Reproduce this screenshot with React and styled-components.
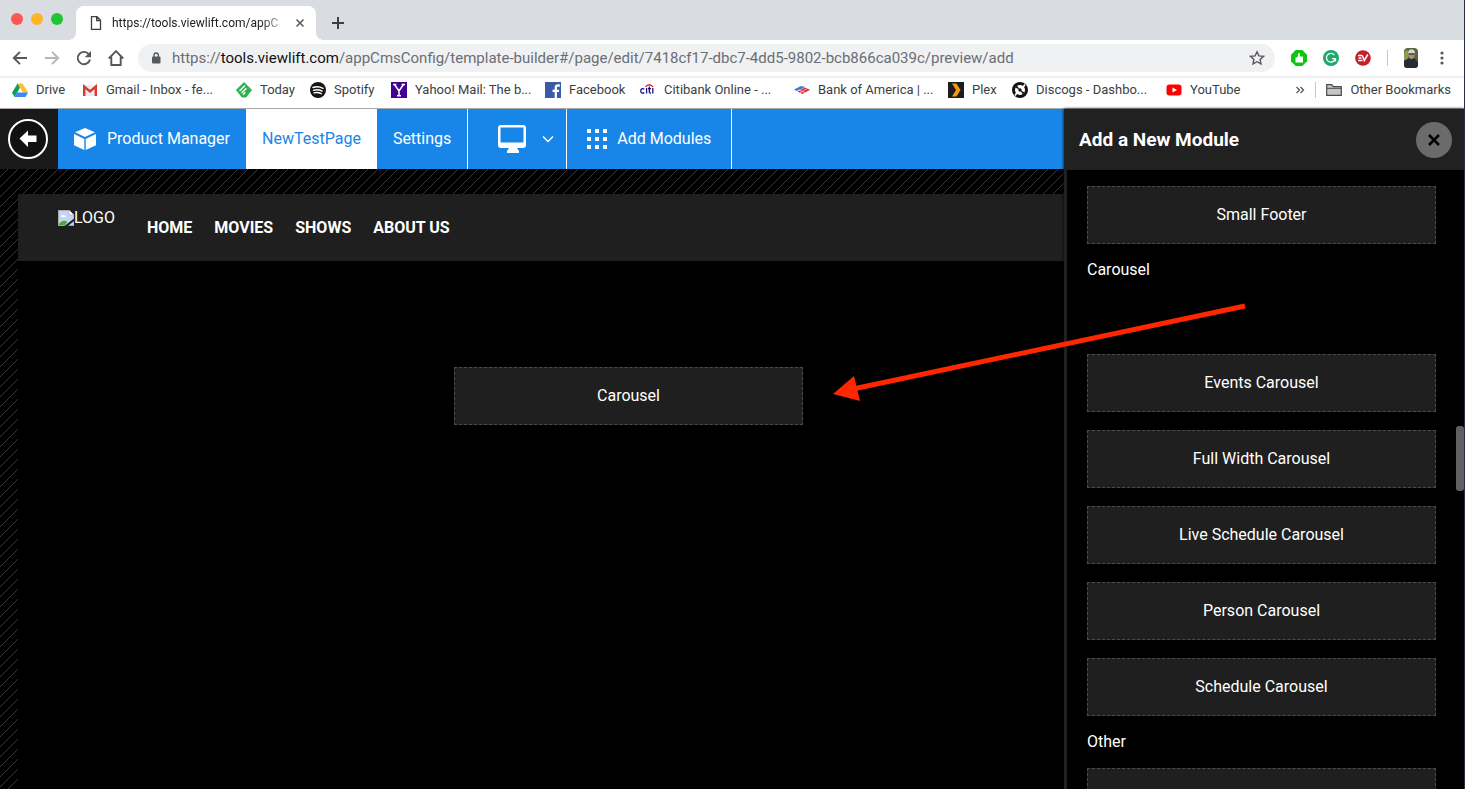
import React, { useState } from 'react'
import styled, { createGlobalStyle } from 'styled-components'

const GlobalStyle = createGlobalStyle`
  * { box-sizing: border-box; }
  body { margin: 0; background: #000; }
  button { margin: 0; padding: 0; border: 0; background: none; font: inherit; color: inherit; cursor: pointer; }
  a { color: inherit; text-decoration: none; }
  svg { display: block; flex: none; }
`;

const Window = styled.div`
  display: flex;
  flex-direction: column;
  height: 100vh;
  overflow: hidden;
  border-right: 1px solid #2c2f3c;
  font-family: Roboto, sans-serif;
  font-size: 16px;
  line-height: 20px;
  color: #fff;
`;

/* browser chrome */

const Chrome = styled.header`
  flex: none;
  background: #fff;
  border-bottom: 1px solid #a9a9a9;
  color: #3c4043;
  font-size: 13px;
`;

const TabStrip = styled.div`
  display: flex;
  align-items: flex-end;
  height: 40px;
  padding-left: 11px;
  background: #d9dce1;
`;

const Lights = styled.div`
  display: flex;
  gap: 8px;
  width: 65px;
  padding-bottom: 15px;
`;

const Light = styled.button`
  width: 12px;
  height: 12px;
  border-radius: 50%;
  && { background: ${props => props.$color}; }
`;

const Tab = styled.div`
  position: relative;
  display: flex;
  align-items: center;
  width: 240px;
  height: 34px;
  padding: 0 10px 0 13px;
  background: #fff;
  border-radius: 8px 8px 0 0;

  &::before, &::after {
    content: '';
    position: absolute;
    bottom: 0;
    width: 8px;
    height: 8px;
  }
  &::before {
    right: 100%;
    background: radial-gradient(circle at 0 0, transparent 8px, #fff 8px);
  }
  &::after {
    left: 100%;
    background: radial-gradient(circle at 100% 0, transparent 8px, #fff 8px);
  }
`;

const TabTitle = styled.span`
  flex: 1;
  margin-left: 9px;
  white-space: nowrap;
  font-size: 12px;
  color: #202124;
  mask-image: linear-gradient(to right, #000 82%, transparent 97%);
`;

const NewTab = styled.button`
  margin-left: 15px;
  padding-bottom: 10px;
`;

const Toolbar = styled.div`
  display: flex;
  align-items: center;
  height: 36px;
  padding: 0 14px 0 12px;
`;

const NavButtons = styled.div`
  display: flex;
  gap: 16px;
  margin-right: 14px;
`;

const AddressBar = styled.div`
  flex: 1;
  display: flex;
  align-items: center;
  height: 28px;
  padding: 0 10px 0 12px;
  border-radius: 14px;
  background: #f0f1f3;
`;

const Url = styled.a`
  flex: 1;
  margin-left: 10px;
  white-space: nowrap;
  font-size: 15px;
  color: #6a6e73;
  b { font-weight: 400; color: #111; }
`;

const Extensions = styled.div`
  display: flex;
  align-items: center;
  gap: 16px;
  margin-left: 16px;
`;

const Divider = styled.span`
  width: 1px;
  height: 16px;
  background: #c6c8cb;
`;

const Bookmarks = styled.nav`
  display: flex;
  align-items: center;
  height: 32px;
  padding: 0 13px 6px 12px;
  border-top: 2px solid #f1f1f2;
`;

const Bookmark = styled.a`
  display: flex;
  align-items: center;
  gap: 8px;
  width: ${props => props.$width}px;
  white-space: nowrap;
`;

const BookmarkEnd = styled.div`
  display: flex;
  align-items: center;
  gap: 10px;
  margin-left: auto;
`;

/* builder */

const Builder = styled.main`
  position: relative;
  flex: 1;
  display: flex;
  min-height: 0;
`;

const Workspace = styled.section`
  flex: 1;
  display: flex;
  flex-direction: column;
  min-width: 0;
`;

const TopBar = styled.nav`
  display: flex;
  height: 60px;
  flex: none;
  background: #1786e8;
`;

const BackButton = styled.button`
  display: flex;
  align-items: center;
  && {
    padding: 0 10px 0 8px;
    background: #1a1a1a;
  }
`;

const TopItem = styled.button`
  display: flex;
  align-items: center;
  gap: ${props => props.$gap || 0}px;
  && {
    padding: 0 ${props => props.$pad || 16}px;
    color: ${props => props.$active ? '#1786e8' : '#fff'};
    background: ${props => props.$active ? '#fff' : 'none'};
    border-right: ${props => props.$line ? '1px solid #fff' : '0'};
  }
`;

// thin diagonal hatch, one line per 10px tile
const Stage = styled.div`
  flex: 1;
  display: flex;
  flex-direction: column;
  padding: 25px 0 0 18px;
  background: #000 linear-gradient(135deg, transparent 47%, #363636 47% 53%, transparent 53%) 0 8px / 10px 10px;
`;

const SiteHeader = styled.div`
  display: flex;
  height: 67px;
  flex: none;
  padding-left: 40px;
  background: #1f1f1f;
`;

const Logo = styled.div`
  display: flex;
  width: 89px;
  padding-top: 14px;
  svg { margin-top: 2px; }
`;

const SiteNav = styled.nav`
  display: flex;
  align-items: center;
  gap: 22px;
  font-weight: 700;
`;

const Canvas = styled.div`
  flex: 1;
  padding: 106px 0 0 436px;
  background: #000;
`;

const ModuleBox = styled.button`
  && {
    display: flex;
    align-items: center;
    justify-content: center;
    flex: none;
    width: ${props => props.$floating ? '349px' : '100%'};
    height: 58px;
    background: #1f1f1f;
    border: 1px dashed #4c4c4c;
    color: #fff;
    cursor: grab;
  }
`;

const Panel = styled.aside`
  position: relative;
  flex: none;
  display: flex;
  flex-direction: column;
  width: 400px;
  background: #000;
  border-left: 3px solid #212121;
  box-shadow: 0 0 3px #000;
`;

const PanelHeader = styled.div`
  display: flex;
  align-items: center;
  justify-content: space-between;
  flex: none;
  height: 61px;
  padding: 0 12px;
  background: #212121;
`;

const PanelTitle = styled.h2`
  margin: 0;
  font-size: 19px;
  font-weight: 700;
`;

const CloseButton = styled.button`
  && {
    display: flex;
    align-items: center;
    justify-content: center;
    width: 36px;
    height: 36px;
    border-radius: 50%;
    background: #6b6b6b;
  }
`;

const ModuleList = styled.div`
  flex: 1;
  display: flex;
  flex-direction: column;
  min-height: 0;
  overflow: hidden;
  padding: 16px 28px 0 20px;
`;

const Group = styled.div`
  display: flex;
  flex-direction: column;
  flex: none;
  gap: 18px;
`;

const GroupTitle = styled.h3`
  flex: none;
  margin: 0;
  font-size: 16px;
  font-weight: 400;
  line-height: 52px;
`;

// gap left in the list by the module being dragged
const EmptySlot = styled.div`
  flex: none;
  height: 58px;
`;

const ScrollThumb = styled.span`
  position: absolute;
  right: 0;
  top: 317px;
  width: 8px;
  height: 65px;
  border-radius: 3px;
  background: #606060;
`;

const DragArrow = styled.svg`
  position: absolute;
  right: 217px;
  top: 189px;
  pointer-events: none;
`;

const Icon = ({ size = 16, box = '0 0 16 16', children }) => (
    <svg width={size} height={size} viewBox={box} fill="none" aria-hidden="true">{children}</svg>
)

const bookmarks = [
    { name: 'Drive', width: 70, icon: <>
        <path d="M5.5 1.5h5L16 10.500h-5z" fill="#fbc02d" />
        <path d="M5.500 1.500L0 10.700 2.600 15 8 5.700z" fill="#129d58" />
        <path d="M5 10.500h11L13.500 15H2.600z" fill="#4285f4" />
    </> },
    { name: 'Gmail - Inbox - fe...', width: 154, icon: <>
        <path d="M1 3h14v11H1z" fill="#ececec" />
        <path d="M2.200 14V4.500L8 9.500l5.800-5V14" stroke="#d93a2f" strokeWidth="2.400" />
    </> },
    { name: 'Today', width: 74, icon: <>
        <path d="M8 0.500L15.500 8 10 15H6L0.500 8z" fill="#2bb24c" stroke="#2bb24c" strokeLinejoin="round" />
        <path d="M4 8.500L8.500 4M6 10.500l4-3.800M7.500 12.200l1.400-1.400" stroke="#fff" strokeWidth="1.500" strokeLinecap="round" />
    </> },
    { name: 'Spotify', width: 81, icon: <>
        <circle cx="8" cy="8" r="8" fill="#191414" />
        <path d="M3 5.500c3.500-1.200 7-.8 10 .8M3.500 8.300c3-.9 6-.6 8.600.8M4 10.900c2.500-.7 5-.4 7.200.8" stroke="#fff" strokeWidth="1.400" strokeLinecap="round" />
    </> },
    { name: 'Yahoo! Mail: The b...', width: 154, icon: <>
        <path d="M0 0h16v16H0z" fill="#400090" />
        <path d="M3.500 2.500L8 9l4.500-6.500M8 9v5M2 2.500h3.400M10.600 2.500H14M6 13.800h4" stroke="#fff" strokeWidth="1.500" />
    </> },
    { name: 'Facebook', width: 95, icon: <>
        <path d="M0 0h16v16H0z" fill="#3b5ba5" />
        <path d="M10.800 16V5.800c0-1.600.8-2.300 2.200-2.300h1.800M7.500 8.800h6.500" stroke="#fff" strokeWidth="2.300" />
    </> },
    { name: 'Citibank Online - ...', width: 154, icon: <>
        <path d="M5.500 5c2-3 5.500-3 7.500 0" stroke="#e2231a" strokeWidth="1.300" />
        <path d="M4.300 7.200c-1.800-1.200-3.600-.2-3.600 1.700s1.800 2.900 3.600 1.700M6.600 6v5.500M9.300 4.500v5c0 1.400.6 1.700 1.800 1.500M8 6.700h3M12.800 6v5.500" stroke="#14148c" strokeWidth="1.300" />
    </> },
    { name: 'Bank of America | ...', width: 154, icon: <>
        <path d="M0 7.500l7-3.500 2.500 1L2.800 9zM4.500 7l4.800-2.700 1.500.8-5 3z" fill="#3c78d8" />
        <path d="M3.500 9.500L11 5.500l5 2.300L8.500 12z" fill="#e6263c" />
        <path d="M6 10.700l7.300-4.200M4.700 7.800l6.500 3" stroke="#fff" strokeWidth=".6" />
    </> },
    { name: 'Plex', width: 64, icon: <>
        <path d="M0 0h16v16H0z" fill="#1d1d1d" />
        <path d="M4 1.500h4.500l4 6.500-4 6.500H4L8 8z" fill="#f09a16" />
    </> },
    { name: 'Discogs - Dashbo...', width: 154, icon: <>
        <circle cx="8" cy="8" r="8" fill="#141414" />
        <circle cx="8" cy="8" r="5" fill="#fff" />
        <path d="M5 3.500L8 8 3.500 5.500zM11 12.500L8 8l4.500 2.500z" fill="#141414" />
        <path d="M3 13.500L5.500 10M10.500 6L13 2.500" stroke="#fff" strokeWidth="1.600" />
        <circle cx="8" cy="8" r="1.700" fill="#141414" />
    </> },
    { name: 'YouTube', width: 80, icon: <>
        <rect x="0.500" y="2.500" width="15" height="11" rx="3" fill="#f00" />
        <path d="M6.500 5.500v5L11 8z" fill="#fff" />
    </> },
]

const groups = [
    { modules: ['Small Footer'] },
    { title: 'Carousel', dragged: true, modules: ['Events Carousel', 'Full Width Carousel', 'Live Schedule Carousel', 'Person Carousel', 'Schedule Carousel'] },
    { title: 'Other', modules: [''] },
]

const BrowserChrome = () => (
    <Chrome>
        <TabStrip>
            <Lights>
                <Light $color="#ff5850" aria-label="Close window" />
                <Light $color="#fdb427" aria-label="Minimize window" />
                <Light $color="#20c436" aria-label="Zoom window" />
            </Lights>
            <Tab>
                <Icon size={14} box="0 0 14 14">
                    <path d="M2.500 .7h5.500l3.500 3.500v9.100h-9zM7.700.9v3.600h3.600" stroke="#3c4043" strokeWidth="1.300" />
                </Icon>
                <TabTitle>https://tools.viewlift.com/appC</TabTitle>
                <button aria-label="Close tab">
                    <Icon size={12} box="0 0 12 12"><path d="M2.500 2.500l7 7M9.500 2.500l-7 7" stroke="#5a5e63" strokeWidth="1.600" /></Icon>
                </button>
            </Tab>
            <NewTab aria-label="New tab">
                <Icon size={14} box="0 0 14 14"><path d="M7 1v12M1 7h12" stroke="#3c4043" strokeWidth="2" /></Icon>
            </NewTab>
        </TabStrip>
        <Toolbar>
            <NavButtons>
                <button aria-label="Back"><Icon><path d="M15 8H2M8 1.800L1.800 8 8 14.200" stroke="#55595e" strokeWidth="1.900" /></Icon></button>
                <button aria-label="Forward"><Icon><path d="M1 8h13M8 1.800L14.200 8 8 14.200" stroke="#b4b6b9" strokeWidth="1.900" /></Icon></button>
                <button aria-label="Reload">
                    <Icon>
                        <path d="M13.200 4.700A6.200 6.200 0 1 0 14 9.500" stroke="#55595e" strokeWidth="1.900" />
                        <path d="M15 1v6.300H8.700z" fill="#55595e" />
                    </Icon>
                </button>
                <button aria-label="Home"><Icon><path d="M.8 8.500L8 1.200l7.200 7.300M3.300 7v8h9.400V7" stroke="#55595e" strokeWidth="1.900" /></Icon></button>
            </NavButtons>
            <AddressBar>
                <Icon size={12} box="0 0 12 12">
                    <rect x="2" y="4.500" width="8.500" height="7" rx="1" fill="#55595e" />
                    <path d="M4 5V3.200a2.200 2.200 0 0 1 4.400 0V5" stroke="#55595e" strokeWidth="1.300" />
                </Icon>
                <Url href="#">https://<b>tools.viewlift.com</b>/appCmsConfig/template-builder#/page/edit/7418cf17-dbc7-4dd5-9802-bcb866ca039c/preview/add</Url>
                <button aria-label="Bookmark this page">
                    <Icon><path d="M8 1.800l1.900 4.100 4.500.5-3.300 3 .9 4.500L8 11.700 4 13.900l.9-4.500-3.300-3 4.500-.5z" stroke="#5a5563" strokeWidth="1.400" /></Icon>
                </button>
            </AddressBar>
            <Extensions>
                <button aria-label="Thumbs up">
                    <Icon>
                        <path d="M4.700 0h6.600L16 4.700v6.600L11.300 16H4.700L0 11.300V4.700z" fill="#0fc60f" />
                        <path d="M4.500 7.500h1.800L7.500 3c1.300-.2 1.600.6 1.500 1.600L8.800 6.500H12v6H4.500z" fill="#fff" />
                    </Icon>
                </button>
                <button aria-label="Grammar check">
                    <Icon>
                        <circle cx="8" cy="8" r="8" fill="#1fa968" />
                        <path d="M11.300 5A4.400 4.400 0 1 0 12.200 8.600H9M12.500 8v3.500" stroke="#fff" strokeWidth="1.300" />
                    </Icon>
                </button>
                <button aria-label="VPN">
                    <Icon>
                        <circle cx="8" cy="8" r="7.800" fill="#c4202c" />
                        <path d="M3 5.500h4.300M3.500 8h3M3 10.500h4.500M7.300 5.500l2 5L12.800 4.500" stroke="#fff" strokeWidth="1.500" />
                    </Icon>
                </button>
                <Divider />
                <button aria-label="Profile">
                    <svg width="14" height="20" viewBox="0 0 14 20" aria-hidden="true">
                        <rect width="14" height="20" rx="4" fill="#55663a" />
                        <path d="M0 5l3-4 2 6-2 5H0z" fill="#8d9a55" />
                        <path d="M0 13l5-3h5l4 4v3a3 3 0 0 1-3 3H3a3 3 0 0 1-3-3z" fill="#252d38" />
                        <ellipse cx="7.500" cy="6.500" rx="3" ry="4.500" fill="#a98f78" />
                        <path d="M4 5c0-5 7-5 7 0z" fill="#d2d5cf" />
                        <path d="M5 5.500h5v1.200H5z" fill="#333" />
                    </svg>
                </button>
                <button aria-label="Menu">
                    <Icon>
                        <g fill="#55595e"><circle cx="8" cy="3" r="1.600" /><circle cx="8" cy="8" r="1.600" /><circle cx="8" cy="13" r="1.600" /></g>
                    </Icon>
                </button>
            </Extensions>
        </Toolbar>
        <Bookmarks>
            {bookmarks.map(item => (
                <Bookmark key={item.name} href="#" $width={item.width}>
                    <Icon>{item.icon}</Icon>
                    {item.name}
                </Bookmark>
            ))}
            <BookmarkEnd>
                <button aria-label="More bookmarks">
                    <Icon size={10} box="0 0 10 10"><path d="M1.500 2l3 3-3 3M5.500 2l3 3-3 3" stroke="#55595e" strokeWidth="1.300" /></Icon>
                </button>
                <Divider />
                <Bookmark href="#">
                    <Icon>
                        <path d="M.7 13.300V2.700h5l1.600 2h8v8.600z" fill="#c6c6c6" stroke="#4a4a4a" strokeWidth="1.200" />
                        <path d="M1 6.300h14.500" stroke="#4a4a4a" />
                    </Icon>
                    Other Bookmarks
                </Bookmark>
            </BookmarkEnd>
        </Bookmarks>
    </Chrome>
)

const App = () => {

    const [panelOpen, setPanelOpen] = useState(true)

    return (
        <Window>
            <GlobalStyle />
            <BrowserChrome />
            <Builder>
                <Workspace>
                    <TopBar>
                        <BackButton aria-label="Go back">
                            <Icon size={40} box="0 0 40 40">
                                <circle cx="20" cy="20" r="19" stroke="#fff" strokeWidth="2" fill="#111" />
                                <path d="M11.500 19.500l8.500-8v5h8.500v6.500H20v5z" fill="#fff" />
                            </Icon>
                        </BackButton>
                        <TopItem $gap={11}>
                            <Icon size={22} box="0 0 22 22">
                                <path d="M11 0l10 4.300L11 9 1 4.300zM0 6l10.300 4.900V22L0 17.300zM22 6l-10.300 4.900V22L22 17.300z" fill="#fff" />
                            </Icon>
                            Product Manager
                        </TopItem>
                        <TopItem $active>NewTestPage</TopItem>
                        <TopItem $line>Settings</TopItem>
                        <TopItem $line $gap={15} $pad={12} aria-label="Desktop preview">
                            <svg width="47" height="28" viewBox="-1 0 47 28" fill="none" aria-hidden="true">
                                <path d="M20 0h22a3 3 0 0 1 3 3v17a3 3 0 0 1-3 3h-6l2 3v2H26v-2l2-3h-8a3 3 0 0 1-3-3V3a3 3 0 0 1 3-3zm-.5 2.500v15h23v-15z" fill="#fff" fillRule="evenodd" />
                            </svg>
                            <Icon size={12} box="0 0 12 12"><path d="M1 3.500l5 5 5-5" stroke="#fff" strokeWidth="1.500" /></Icon>
                        </TopItem>
                        <TopItem $line $gap={10} $pad={20}>
                            <Icon size={20} box="0 0 20 20">
                                <path d="M0 0h4v4H0zM8 0h4v4H8zM16 0h4v4h-4zM0 8h4v4H0zM8 8h4v4H8zM16 8h4v4h-4zM0 16h4v4H0zM8 16h4v4H8zM16 16h4v4h-4z" fill="#fff" />
                            </Icon>
                            Add Modules
                        </TopItem>
                    </TopBar>
                    <Stage>
                        <SiteHeader>
                            <Logo>
                                <Icon>
                                    <path d="M0 0h11l5 5v11H0z" fill="#c3d6f5" />
                                    <path d="M3 6.500c0-1.500 2-2.500 3.500-1 2-.5 2 1.500 1 1.500H3.500z" fill="#fff" />
                                    <path d="M0 15.500c2-4 6-6.500 9.500-3.500L6 16H0z" fill="#4fa832" />
                                    <path d="M.5 0v15.500H16V5M.5 .5H11" stroke="#a9a9a9" />
                                    <path d="M11 0v5h5z" fill="#fff" stroke="#a9a9a9" strokeWidth=".6" />
                                    <path d="M6.500 16L16 8.500v2.500l-6 5z" fill="#1f1f1f" />
                                </Icon>
                                LOGO
                            </Logo>
                            <SiteNav>
                                <a href="#">HOME</a>
                                <a href="#">MOVIES</a>
                                <a href="#">SHOWS</a>
                                <a href="#">ABOUT US</a>
                            </SiteNav>
                        </SiteHeader>
                        <Canvas>
                            <ModuleBox $floating>Carousel</ModuleBox>
                        </Canvas>
                    </Stage>
                </Workspace>
                {panelOpen &&
                    <Panel>
                        <PanelHeader>
                            <PanelTitle>Add a New Module</PanelTitle>
                            <CloseButton aria-label="Close" onClick={() => setPanelOpen(false)}>
                                <Icon size={14} box="0 0 14 14"><path d="M2 2l10 10M12 2L2 12" stroke="#000" strokeWidth="2.500" /></Icon>
                            </CloseButton>
                        </PanelHeader>
                        <ModuleList>
                            {groups.map((group, i) => (
                                <React.Fragment key={i}>
                                    {group.title && <GroupTitle>{group.title}</GroupTitle>}
                                    {group.dragged && <EmptySlot />}
                                    <Group>
                                        {group.modules.map(name => (
                                            <ModuleBox key={name}>{name}</ModuleBox>
                                        ))}
                                    </Group>
                                </React.Fragment>
                            ))}
                        </ModuleList>
                        <ScrollThumb />
                    </Panel>
                }
                <DragArrow width="414" height="110" viewBox="0 0 414 110" aria-hidden="true">
                    <path d="M412 8L20 91" stroke="#ff2600" strokeWidth="5" />
                    <path d="M0 96l21-18 6 25z" fill="#ff2600" />
                </DragArrow>
            </Builder>
        </Window>
    )
}

export default App
